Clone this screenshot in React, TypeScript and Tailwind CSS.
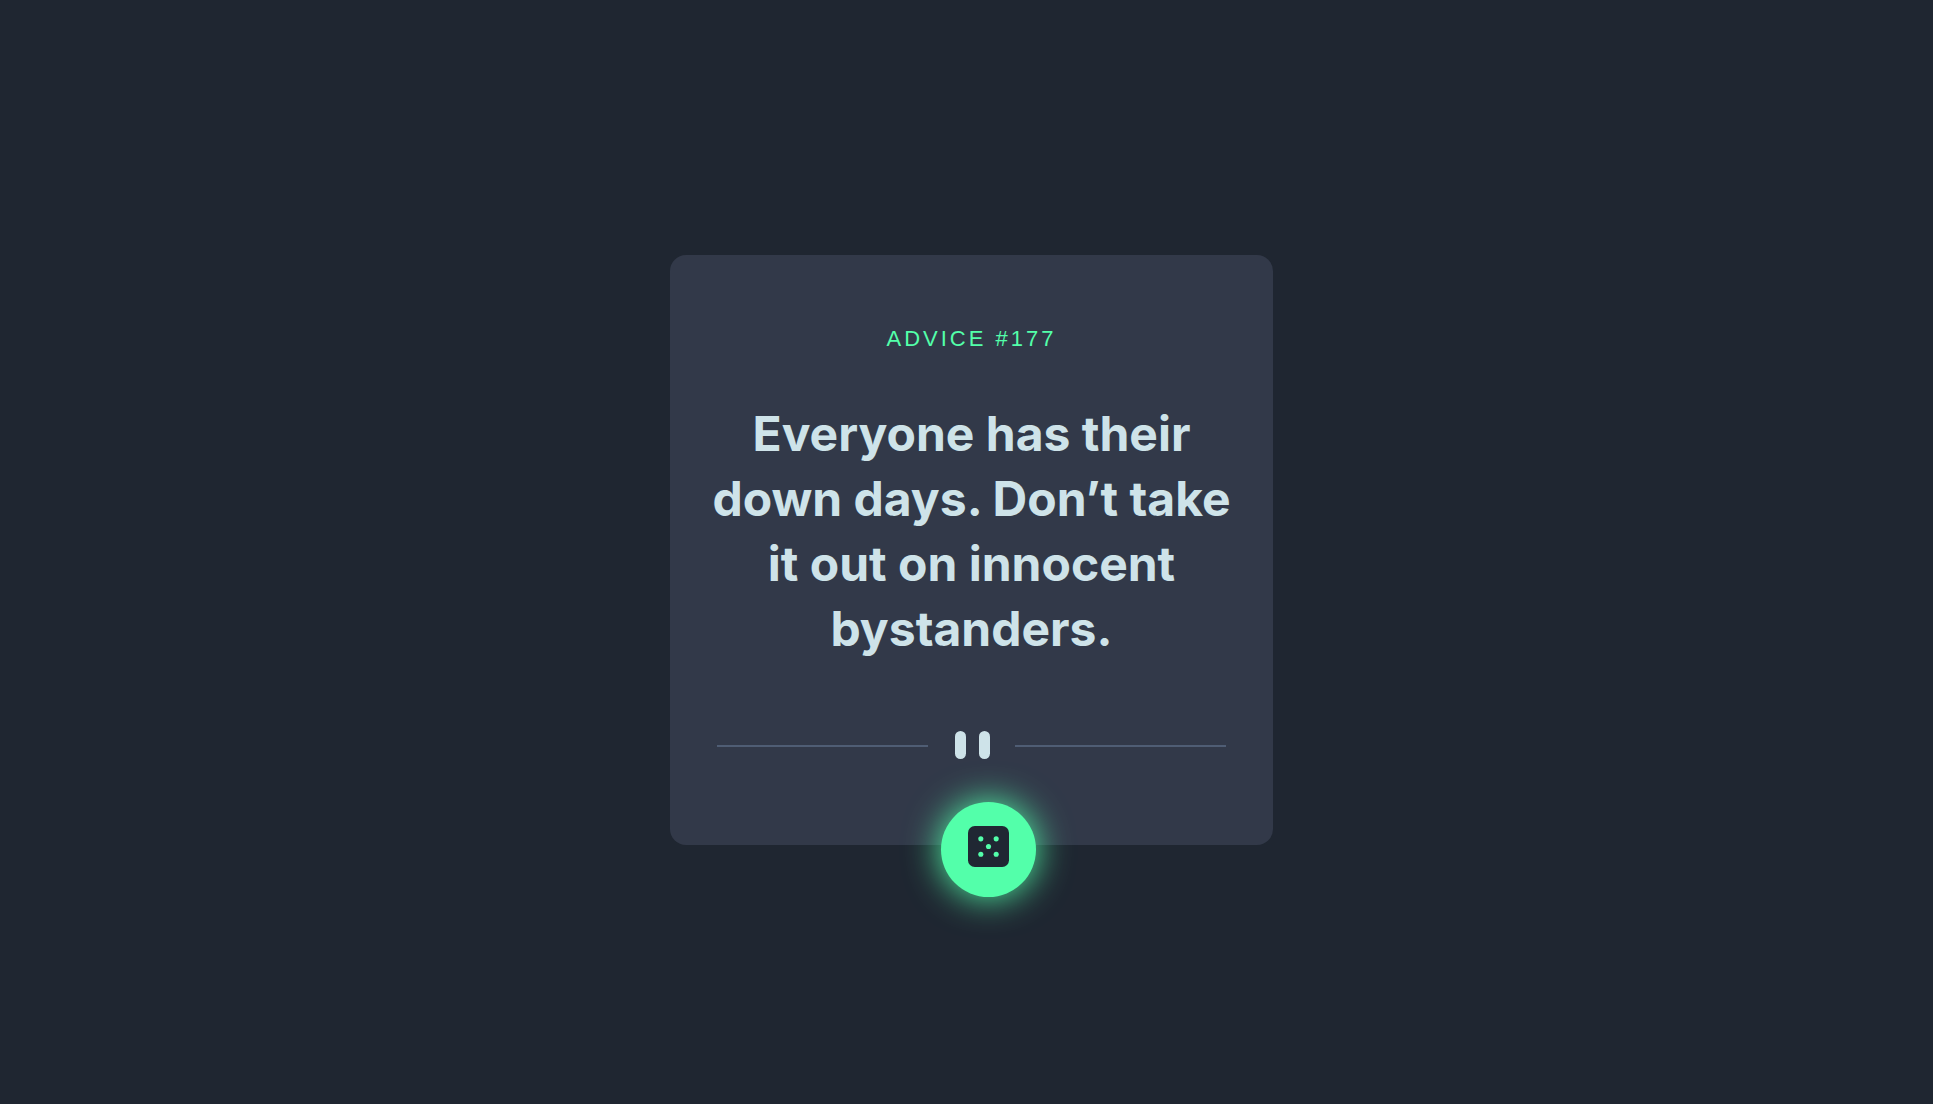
function Divider() {
  return (
    <div className="flex items-center justify-between" aria-hidden="true">
      <span className="mt-[2px] h-[2px] w-[211px] shrink bg-[#4f5d74]" />
      <span className="ml-[2px] flex shrink-0 gap-[13px]">
        <span className="h-7 w-[11px] rounded-full bg-[#cee3e9]" />
        <span className="h-7 w-[11px] rounded-full bg-[#cee3e9]" />
      </span>
      <span className="mt-[2px] h-[2px] w-[211px] shrink bg-[#4f5d74]" />
    </div>
  );
}

function DiceIcon() {
  return (
    <svg viewBox="0 0 24 24" className="mb-[6px] size-[41px]" aria-hidden="true">
      <rect width="24" height="24" rx="4" fill="#202733" />
      <g fill="#53ffaa">
        <circle cx="7.5" cy="7.5" r="1.5" />
        <circle cx="16.5" cy="7.5" r="1.5" />
        <circle cx="12" cy="12" r="1.5" />
        <circle cx="7.5" cy="16.5" r="1.5" />
        <circle cx="16.5" cy="16.5" r="1.5" />
      </g>
    </svg>
  );
}

export default function App() {
  return (
    <main className="flex min-h-screen items-center justify-center bg-[#1f2631] pb-1 pl-[10px]">
      <section className="relative w-full max-w-[603px] rounded-2xl bg-[#323949] px-[47px] pt-[72px] pb-[86px] text-center">
        <h1 className="font-['Liberation_Sans',Arial,sans-serif] text-[22px] leading-6 tracking-[3px] text-[#53ffaa]">
          ADVICE #177
        </h1>
        <p className="-mx-2 mt-[50px] mb-[70px] font-[Inter,sans-serif] text-[48px] leading-[65px] font-bold text-[#cee3e9]">
          Everyone has their down days. Don’t take it out on innocent bystanders.
        </p>
        <Divider />
        <button
          type="button"
          aria-label="Get new advice"
          className="absolute -bottom-[52px] left-1/2 ml-[-31px] flex size-[95px] cursor-pointer items-center justify-center rounded-full bg-[#53ffaa] shadow-[0_0_36px_#53ffaa]"
        >
          <DiceIcon />
        </button>
      </section>
    </main>
  );
}
